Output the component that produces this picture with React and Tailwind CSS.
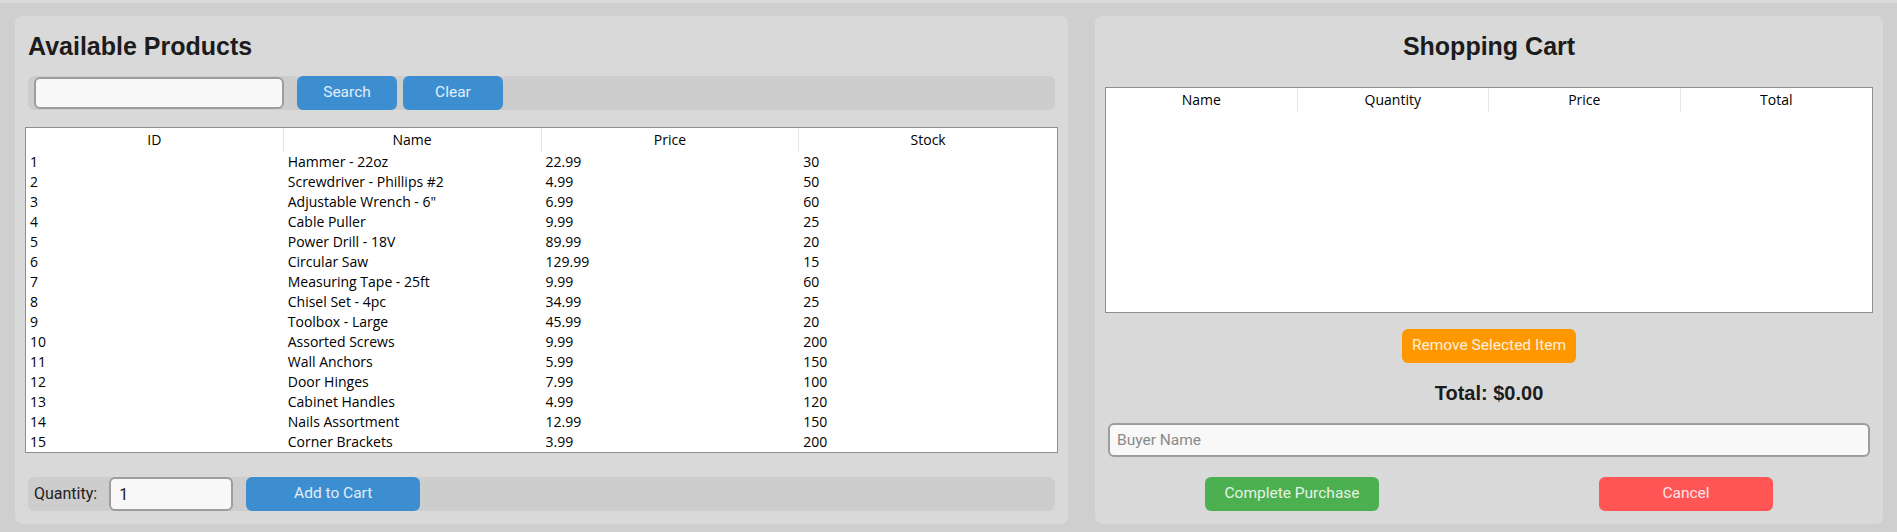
import React from "react";

const products = [
  [1, "Hammer - 22oz", "22.99", 30],
  [2, "Screwdriver - Phillips #2", "4.99", 50],
  [3, 'Adjustable Wrench - 6"', "6.99", 60],
  [4, "Cable Puller", "9.99", 25],
  [5, "Power Drill - 18V", "89.99", 20],
  [6, "Circular Saw", "129.99", 15],
  [7, "Measuring Tape - 25ft", "9.99", 60],
  [8, "Chisel Set - 4pc", "34.99", 25],
  [9, "Toolbox - Large", "45.99", 20],
  [10, "Assorted Screws", "9.99", 200],
  [11, "Wall Anchors", "5.99", 150],
  [12, "Door Hinges", "7.99", 100],
  [13, "Cabinet Handles", "4.99", 120],
  [14, "Nails Assortment", "12.99", 150],
  [15, "Corner Brackets", "3.99", 200],
];

function Header({ cols }) {
  return (
    <div className="grid grid-cols-4 h-[24px] shrink-0">
      {cols.map((c, i) => (
        <div
          key={c}
          className={
            "flex items-center justify-center leading-none " +
            (i < cols.length - 1 ? "border-r border-[#e6e6e6]" : "")
          }
        >
          {c}
        </div>
      ))}
    </div>
  );
}

function Btn({ className, children }) {
  return (
    <button
      className={
        "h-[34px] rounded-[6px] text-[15.5px] text-white/85 font-['Roboto',sans-serif] shrink-0 " +
        className
      }
    >
      {children}
    </button>
  );
}

export default function App() {
  return (
    <div className="w-[1897px] h-[532px] bg-[#cfcfcf] border-t-[3px] border-[#dadada] flex gap-[27px] pl-[15px] pr-[14px] pt-[13px] pb-[8px] overflow-hidden">
      {/* products */}
      <div className="w-[1053px] shrink-0 bg-[#d9d9d9] rounded-[7px] px-[10px] pt-[18px] pb-[12px] flex flex-col">
        <h2 className="ml-[3px] text-[25px] leading-none font-bold text-[#1c1c1c] font-['Liberation_Sans',Arial,sans-serif]">
          Available Products
        </h2>

        <div className="mt-[17px] mx-[3px] h-[34px] bg-[#cdcdcd] rounded-[6px] flex items-center pl-[6px]">
          <input
            className="w-[250px] h-[32px] bg-[#f8f8f8] border-2 border-[#9b9da1] rounded-[6px] px-2 outline-none"
            defaultValue=""
          />
          <Btn className="ml-[13px] w-[100px] bg-[#3c8ed1]">Search</Btn>
          <Btn className="ml-[6px] w-[100px] bg-[#3c8ed1]">Clear</Btn>
        </div>

        <div className="mt-[17px] h-[326px] bg-white border border-[#8d8e96] flex flex-col text-[14px] text-black font-['Open_Sans',sans-serif]">
          <Header cols={["ID", "Name", "Price", "Stock"]} />
          {products.map((p) => (
            <div key={p[0]} className="grid grid-cols-4 h-[20px] leading-[20px]">
              {p.map((v, i) => (
                <div key={i} className="pl-[4px] whitespace-nowrap">
                  {v}
                </div>
              ))}
            </div>
          ))}
        </div>

        <div className="mt-[24px] mx-[3px] h-[34px] bg-[#cdcdcd] rounded-[6px] flex items-center pl-[6px] font-['Roboto',sans-serif]">
          <span className="text-[16px] text-[#222]">Quantity:</span>
          <input
            className="ml-[12px] w-[124px] h-[34px] bg-[#f8f8f8] border-2 border-[#9b9da1] rounded-[6px] px-[8px] text-[16px] text-[#222] outline-none"
            defaultValue="1"
          />
          <Btn className="ml-[13px] w-[174px] bg-[#3c8ed1]">Add to Cart</Btn>
        </div>
      </div>

      {/* cart */}
      <div className="flex-1 min-w-0 bg-[#d9d9d9] rounded-[7px] pt-[18px] pb-[13px] flex flex-col">
        <h2 className="text-center text-[25px] leading-none font-bold text-[#1c1c1c] font-['Liberation_Sans',Arial,sans-serif]">
          Shopping Cart
        </h2>

        <div className="mt-[28px] mx-[10px] h-[226px] bg-white border border-[#8d8e96] text-[14px] text-black font-['Open_Sans',sans-serif]">
          <Header cols={["Name", "Quantity", "Price", "Total"]} />
        </div>

        <Btn className="mt-[16px] self-center w-[174px] bg-[#ff9800]">Remove Selected Item</Btn>

        <div className="mt-[20px] text-center text-[20px] leading-none font-bold text-[#1c1c1c] font-['Liberation_Sans',Arial,sans-serif]">
          Total: $0.00
        </div>

        <input
          className="mt-[20px] mx-[13px] h-[34px] bg-[#f8f8f8] border-2 border-[#9b9da1] rounded-[6px] px-[7px] text-[15.5px] font-['Roboto',sans-serif] placeholder:text-[#8a8a8a] outline-none"
          placeholder="Buyer Name"
        />

        <div className="mt-[20px] grid grid-cols-2">
          <Btn className="justify-self-center w-[174px] bg-[#4caf50]">Complete Purchase</Btn>
          <Btn className="justify-self-center w-[174px] bg-[#ff5555]">Cancel</Btn>
        </div>
      </div>
    </div>
  );
}
